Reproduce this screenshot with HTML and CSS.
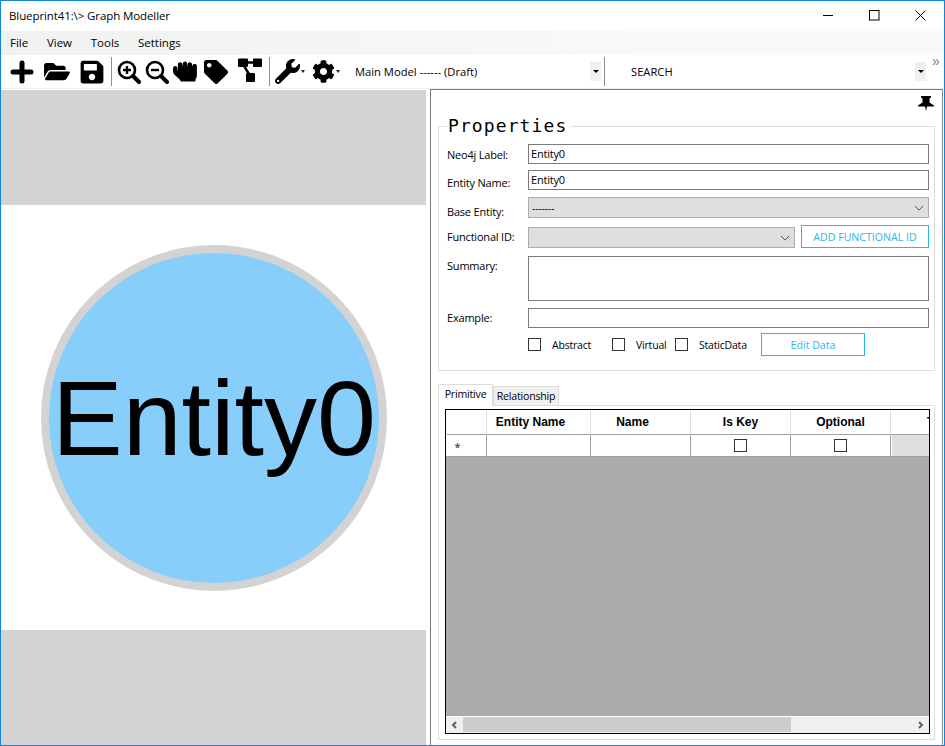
FILE: index.html
```html
<!DOCTYPE html>
<html lang="en">
<head>
<meta charset="utf-8">
<title>Blueprint41:\&gt; Graph Modeller</title>
<link rel="stylesheet" href="styles.css">
</head>
<body>
<div class="window">
  <header class="titlebar">
    <span class="title">Blueprint41:\&gt; Graph Modeller</span>
    <div class="winbtns">
      <svg class="winbtn" viewBox="0 0 11 11"><path d="M0 5.500H10" stroke="#000" stroke-width="1"/></svg>
      <svg class="winbtn" viewBox="0 0 11 11"><rect x="0.500" y="0.500" width="9.500" height="9.500" fill="none" stroke="#000"/></svg>
      <svg class="winbtn" viewBox="0 0 11 11"><path d="M0.500 0.500L10.500 10.500M10.500 0.500L0.500 10.500" stroke="#000" stroke-width="1"/></svg>
    </div>
  </header>
  <nav class="menubar">
    <span class="menu-item">File</span><span class="menu-item">View</span><span class="menu-item">Tools</span><span class="menu-item">Settings</span>
  </nav>
  <div class="toolbar">
    <svg class="ti i-plus" viewBox="0 0 24 24"><path d="M3 12H21M12 3V21" stroke="#000" stroke-width="5" stroke-linecap="round"/></svg>
    <svg class="ti i-folder" viewBox="0 0 576 512"><path d="M572.694 292.093L500.27 416.248A63.997 63.997 0 0 1 444.989 448H45.025c-18.523 0-30.064-20.093-20.731-36.093l72.424-124.155A64 64 0 0 1 152 256h399.964c18.523 0 30.064 20.093 20.73 36.093zM152 224h328v-48c0-26.51-21.49-48-48-48H272l-64-64H48C21.49 64 0 85.49 0 112v278.046l69.077-118.418C86.214 242.25 117.989 224 152 224z"/></svg>
    <svg class="ti i-save" viewBox="0 0 448 512"><path d="M433.941 129.941l-83.882-83.882A48 48 0 0 0 316.118 32H48C21.49 32 0 53.49 0 80v352c0 26.51 21.49 48 48 48h352c26.51 0 48-21.49 48-48V163.882a48 48 0 0 0-14.059-33.941zM224 416c-35.346 0-64-28.654-64-64 0-35.346 28.654-64 64-64s64 28.654 64 64c0 35.346-28.654 64-64 64zm96-304.52V212c0 6.627-5.373 12-12 12H76c-6.627 0-12-5.373-12-12V108c0-6.627 5.373-12 12-12h228.52c3.183 0 6.235 1.264 8.485 3.515l3.48 3.48A11.996 11.996 0 0 1 320 111.48z"/></svg>
    <span class="sep sep-a"></span>
    <svg class="ti i-zoomin" viewBox="0 0 24 24"><circle cx="10" cy="10" r="8" fill="none" stroke="#000" stroke-width="2.6"/><path d="M16 16L22 22" stroke="#000" stroke-width="4" stroke-linecap="round"/><path d="M6 10H14M10 6V14" stroke="#000" stroke-width="2.4"/></svg>
    <svg class="ti i-zoomout" viewBox="0 0 24 24"><circle cx="10" cy="10" r="8" fill="none" stroke="#000" stroke-width="2.6"/><path d="M16 16L22 22" stroke="#000" stroke-width="4" stroke-linecap="round"/><path d="M6 10H14" stroke="#000" stroke-width="2.4"/></svg>
    <svg class="ti i-hand" viewBox="0 0 512 512"><path d="M464.8 80c-26.9-.4-48.8 21.2-48.8 48h-8V96.8c0-26.3-20.9-48.3-47.2-48.8-26.9-.4-48.8 21.2-48.8 48v32h-8V80.8c0-26.3-20.9-48.3-47.2-48.8-26.9-.4-48.8 21.2-48.8 48v48h-8V96.8c0-26.3-20.9-48.3-47.2-48.8-26.9-.4-48.8 21.2-48.8 48v136l-8-7.1v-48.1c0-26.3-20.9-48.3-47.2-48.8C21.9 127.6 0 149.2 0 176v66.4c0 27.4 11.7 53.5 32.2 71.8l111.7 99.3c10.2 9.1 16.1 22.2 16.1 35.9 0 4.4 3.6 8 8 8h304c4.4 0 8-3.6 8-8v-13.6c0-12.9 2.6-25.6 7.5-37.6l15.2-35.8c4.9-11.9 7.3-24.7 7.3-37.6V128c0-26.2-21.3-47.6-47.2-48z"/></svg>
    <svg class="ti i-tag" viewBox="0 0 512 512"><path d="M0 252.118V48C0 21.49 21.49 0 48 0h204.118a48 48 0 0 1 33.941 14.059l211.882 211.882c18.745 18.745 18.745 49.137 0 67.882L293.823 497.941c-18.745 18.745-49.137 18.745-67.882 0L14.059 286.059A48 48 0 0 1 0 252.118zM112 64c-26.51 0-48 21.49-48 48s21.49 48 48 48 48-21.49 48-48-21.49-48-48-48z"/></svg>
    <svg class="ti i-tree" viewBox="0 0 24 24"><path d="M0 1.500A1 1 0 0 1 1 .5H9A1 1 0 0 1 10 1.500V8A1 1 0 0 1 9 9H1A1 1 0 0 1 0 8ZM15 1.500A1 1 0 0 1 16 .5H23A1 1 0 0 1 24 1.500V8A1 1 0 0 1 23 9H16A1 1 0 0 1 15 8ZM8 16A1 1 0 0 1 9 15H16A1 1 0 0 1 17 16V23A1 1 0 0 1 16 24H9A1 1 0 0 1 8 23Z"/><path d="M9 4.500H16M6 8L11 16" stroke="#000" stroke-width="2.4"/></svg>
    <span class="sep sep-b"></span>
    <svg class="ti i-wrench" viewBox="0 0 512 512"><path d="M507.73 109.1c-2.24-9.03-13.54-12.09-20.12-5.51l-74.36 74.36-67.88-11.31-11.31-67.88 74.36-74.36c6.62-6.62 3.43-17.9-5.66-20.16-47.38-11.74-99.55.91-136.58 37.93-39.64 39.64-50.55 97.1-34.05 147.2L18.74 402.76c-24.99 24.99-24.99 65.51 0 90.5 24.99 24.99 65.51 24.99 90.5 0l213.21-213.21c50.12 16.71 107.47 5.68 147.37-34.22 37.07-37.07 49.7-89.32 37.91-136.73zM64 472c-13.25 0-24-10.75-24-24 0-13.26 10.75-24 24-24s24 10.74 24 24c0 13.25-10.75 24-24 24z"/></svg>
    <span class="caret-small"></span>
    <svg class="ti i-gear" viewBox="0 0 512 512"><path d="M487.4 315.7l-42.6-24.6c4.3-23.2 4.3-47 0-70.2l42.6-24.6c4.9-2.8 7.1-8.6 5.5-14-11.1-35.6-30-67.8-54.7-94.6-3.8-4.1-10-5.1-14.8-2.3L380.8 110c-17.9-15.4-38.5-27.3-60.8-35.1V25.8c0-5.6-3.9-10.5-9.4-11.7-36.7-8.2-74.3-7.8-109.2 0-5.5 1.2-9.4 6.1-9.4 11.7V75c-22.2 7.9-42.8 19.8-60.8 35.1L88.7 85.5c-4.9-2.8-11-1.9-14.8 2.3-24.7 26.7-43.6 58.9-54.7 94.6-1.7 5.4.6 11.2 5.5 14L67.3 221c-4.3 23.2-4.3 47 0 70.2l-42.6 24.6c-4.9 2.8-7.1 8.6-5.5 14 11.1 35.6 30 67.8 54.7 94.6 3.8 4.1 10 5.1 14.8 2.3l42.6-24.6c17.9 15.4 38.5 27.3 60.8 35.1v49.2c0 5.6 3.9 10.5 9.4 11.7 36.7 8.2 74.3 7.8 109.2 0 5.5-1.2 9.4-6.1 9.4-11.7v-49.2c22.2-7.9 42.8-19.8 60.8-35.1l42.6 24.6c4.9 2.8 11 1.9 14.8-2.3 24.7-26.7 43.6-58.9 54.7-94.6 1.5-5.5-.7-11.3-5.6-14.1zM256 336c-44.1 0-80-35.9-80-80s35.9-80 80-80 80 35.9 80 80-35.9 80-80 80z"/></svg>
    <span class="caret-small"></span>
    <div class="tcombo tcombo-model"><span class="tcombo-text">Main Model ------ (Draft)</span><span class="tdrop"><span class="tdrop-arrow"></span></span></div>
    <span class="sep sep-c"></span>
    <div class="tcombo tcombo-search"><span class="tcombo-text">SEARCH</span><span class="tdrop"><span class="tdrop-arrow"></span></span></div>
    <span class="overflow">»</span>
  </div>
  <main class="content">
    <section class="canvas">
      <div class="band band-top"></div>
      <div class="stage">
        <div class="entity"><span class="entity-name">Entity0</span></div>
      </div>
      <div class="band band-bottom"></div>
    </section>
    <aside class="panel">
      <div class="pinbar">
        <svg class="pin" viewBox="0 0 16 15"><path d="M3 0H13V1.500L11.500 2.500V6.500L16 9.500V10.500H9L8 15L7 10.500H0V9.500L4.500 6.500V2.500L3 1.500Z"/></svg>
      </div>
      <fieldset class="props">
        <legend class="props-title">Properties</legend>
        <div class="row row-neo"><label class="lbl">Neo4j Label:</label><div class="field">Entity0</div></div>
        <div class="row row-name"><label class="lbl">Entity Name:</label><div class="field">Entity0</div></div>
        <div class="row row-base"><label class="lbl">Base Entity:</label><div class="select"><span>-------</span><svg class="chev" viewBox="0 0 12 7"><path d="M1 1L6 6L11 1" fill="none" stroke="#555" stroke-width="1.200"/></svg></div></div>
        <div class="row row-func"><label class="lbl">Functional ID:</label><div class="select select-short"><span></span><svg class="chev" viewBox="0 0 12 7"><path d="M1 1L6 6L11 1" fill="none" stroke="#555" stroke-width="1.200"/></svg></div><button class="flat flat-add">ADD FUNCTIONAL ID</button></div>
        <div class="row row-sum"><label class="lbl">Summary:</label><div class="field field-tall"></div></div>
        <div class="row row-ex"><label class="lbl">Example:</label><div class="field"></div></div>
        <div class="row row-checks">
          <span class="check"></span><span class="chk-lbl chk-abstract">Abstract</span>
          <span class="check"></span><span class="chk-lbl chk-virtual">Virtual</span>
          <span class="check"></span><span class="chk-lbl chk-static">StaticData</span>
          <button class="flat flat-edit">Edit Data</button>
        </div>
      </fieldset>
      <div class="tabs">
        <span class="tab tab-active">Primitive</span><span class="tab">Relationship</span>
      </div>
      <div class="tabpage">
        <div class="dgrid">
          <div class="dhead">
            <span class="rowhead"></span>
            <span class="col col-entity col-shift">Entity Name</span>
            <span class="col col-name col-shift">Name</span>
            <span class="col col-key">Is Key</span>
            <span class="col col-opt">Optional</span>
            <span class="col col-rest">T</span>
          </div>
          <div class="drow">
            <span class="rowhead rowhead-new"><span class="star">*</span></span>
            <span class="cell col-entity"></span>
            <span class="cell col-name"></span>
            <span class="cell col-key"><span class="check"></span></span>
            <span class="cell col-opt"><span class="check"></span></span>
            <span class="cell cell-rest"></span>
          </div>
          <div class="dempty"></div>
          <div class="hscroll">
            <svg class="sarrow" viewBox="0 0 8 8"><path d="M5.500 1L2.500 4L5.500 7" fill="none" stroke="#606060" stroke-width="2"/></svg>
            <div class="strack"><div class="sthumb"></div></div>
            <svg class="sarrow" viewBox="0 0 8 8"><path d="M2.500 1L5.500 4L2.500 7" fill="none" stroke="#606060" stroke-width="2"/></svg>
          </div>
        </div>
      </div>
    </aside>
  </main>
</div>
</body>
</html>
```
FILE: styles.css
```css
* { box-sizing: border-box; }
html, body { margin: 0; padding: 0; }
body { width: 945px; height: 746px; overflow: hidden; background: #fff; font-family: "Open Sans", "Noto Sans", sans-serif; font-size: 12px; color: #000; }

.window { width: 945px; height: 746px; border: 1px solid #0f85d9; border-bottom-color: #3a7aa6; display: flex; flex-direction: column; background: #fff; }

.titlebar { height: 30px; flex: none; display: flex; align-items: center; justify-content: space-between; padding-left: 8px; padding-bottom: 2px; }
.title { font-size: 11.500px; letter-spacing: -0.1px; }
.winbtns { display: flex; align-items: center; padding-right: 18px; margin-top: 1px; }
.winbtn { width: 11px; height: 11px; margin-left: 35px; display: block; }

.menubar { height: 24px; flex: none; display: flex; align-items: center; background: linear-gradient(to right, #f1f1f1, #f9f9f9 70%); padding-left: 9px; padding-bottom: 2px; font-size: 11.500px; }
.menu-item { margin-right: 18.700px; }

.toolbar { height: 34px; flex: none; display: flex; align-items: center; background: #fff; border-bottom: 1px solid #f0f0f0; padding-left: 9px; }
.ti { display: block; flex: none; fill: #000; }
.i-plus { width: 24px; height: 24px; }
.i-folder { width: 26px; height: 23px; margin-left: 10px; }
.i-save { width: 24px; height: 26px; margin-left: 10px; }
.i-zoomin { width: 24px; height: 24px; margin-left: 5px; }
.i-zoomout { width: 24px; height: 24px; margin-left: 4px; }
.i-hand { width: 24px; height: 24px; margin-left: 4px; }
.i-tag { width: 24px; height: 24px; margin-left: 7px; }
.i-tree { width: 24px; height: 24px; margin-left: 10px; margin-top: -3px; }
.i-wrench { width: 25px; height: 25px; margin-left: 5px; }
.i-gear { width: 23px; height: 25px; margin-left: 7px; }
.sep { flex: none; width: 1px; height: 29px; background: #8e8e8e; }
.sep-a { margin-left: 7px; }
.sep-b { margin-left: 7px; }
.sep-c { margin-left: 3px; }
.caret-small { flex: none; width: 0; height: 0; margin-left: 1px; border-left: 2.500px solid transparent; border-right: 2.500px solid transparent; border-top: 3px solid #222; }
.tcombo { flex: none; display: flex; align-items: center; justify-content: space-between; }
.tcombo-model { width: 246px; margin-left: 15px; }
.tcombo-search { width: 295px; margin-left: 26px; }
.tcombo-text { font-size: 11.200px; }
.tdrop { width: 11px; height: 19px; background: #f0f0f0; display: flex; align-items: center; justify-content: center; }
.tdrop-arrow { width: 0; height: 0; border-left: 3px solid transparent; border-right: 3px solid transparent; border-top: 3px solid #000; }
.overflow { flex: none; margin-left: 6px; align-self: flex-start; margin-top: 0; color: #7a7aa8; font-size: 14px; line-height: 12px; font-family: "Liberation Sans", sans-serif; }

.content { flex: 1; display: flex; min-height: 0; }

.canvas { width: 425px; flex: none; display: flex; flex-direction: column; margin-top: 1px; }
.band { background: #d3d3d3; flex: none; }
.band-top { height: 115px; }
.band-bottom { height: 115px; }
.stage { height: 425px; flex: none; background: #fff; display: flex; align-items: center; justify-content: center; }
.entity { width: 346px; height: 346px; border-radius: 50%; background: #87cefa; border: 8px solid #d3d3d3; display: flex; align-items: center; justify-content: center; margin-left: 1px; }
.entity-name { font-family: "Liberation Sans", Arial, sans-serif; font-size: 106px; line-height: 1; white-space: nowrap; }

.panel { margin-left: 4px; width: 513px; height: 656px; flex: none; border-left: 1px solid #7a7a7a; border-top: 1px solid #7a7a7a; border-right: 1px solid #8a8a8a; display: flex; flex-direction: column; padding: 0 7px 0 7px; }
.pinbar { height: 26px; flex: none; display: flex; justify-content: flex-end; padding-top: 6px; }
.pin { width: 16px; height: 15px; display: block; fill: #000; margin-right: 1px; }

.props { margin: 0; padding: 0 5px 0 8px; height: 255px; width: 497px; flex: none; border: 1px solid #dcdcdc; display: flex; flex-direction: column; }
.props-title { font-family: "DejaVu Sans Mono", "Liberation Mono", monospace; font-size: 18px; letter-spacing: 1.100px; line-height: 20px; padding: 0 4px 0 1px; margin-left: 0; }
.lbl { width: 81px; flex: none; font-size: 11px; white-space: nowrap; letter-spacing: -0.2px; }
.row { display: flex; align-items: flex-start; flex: none; }
.field { flex: 1; height: 20px; border: 1px solid #7a7a7a; background: #fff; font-size: 11px; padding: 1px 2px; line-height: 15px; letter-spacing: -0.2px; }
.field-tall { height: 45px; }
.select { flex: 1; height: 21px; background: #dfdfdf; border: 1px solid #adadad; display: flex; align-items: center; justify-content: space-between; padding: 0 4px 0 3px; font-size: 10px; }
.select-short { flex: none; width: 267px; }
.chev { width: 10px; height: 6px; display: block; }

.row-neo { margin-top: 8px; }
.row-name { margin-top: 6px; }
.row-base { margin-top: 7px; }
.row-func { margin-top: 8px; }
.row-sum { margin-top: 8px; }
.row-ex { margin-top: 7px; }
.row-checks { margin-top: 5px; margin-left: 81px; align-items: center; height: 23px; }
.row-neo .lbl { padding-top: 3px; }
.row-name .lbl { padding-top: 5px; }
.row-base .lbl { padding-top: 7px; }
.row-func .lbl { padding-top: 2px; }
.row-sum .lbl { padding-top: 2px; }
.row-ex .lbl { padding-top: 2px; }

.check { width: 13px; height: 13px; border: 1px solid #333; background: #fff; display: block; flex: none; }
.chk-lbl { font-size: 10.500px; letter-spacing: -0.2px; }
.chk-abstract { margin-left: 11px; width: 60px; }
.chk-virtual { margin-left: 11px; width: 39px; }
.chk-static { margin-left: 11px; width: 62px; }
.flat { background: #fff; border: 1px solid #29b6f0; color: #29b6f0; font-family: inherit; font-size: 10.600px; padding: 0; cursor: pointer; }
.flat-add { flex: none; width: 128px; height: 23px; margin-left: 6px; margin-top: -2px; }
.flat-edit { flex: none; width: 104px; height: 23px; }

.tabs { display: flex; flex: none; margin-top: 13px; height: 21px; align-items: flex-end; }
.tab { height: 19px; width: 66px; background: #f0f0f0; border: 1px solid #dcdcdc; border-bottom: none; font-size: 10.600px; text-align: center; line-height: 18px; letter-spacing: -0.2px; }
.tab-active { height: 22px; width: 55px; background: #fff; line-height: 19px; position: relative; z-index: 1; margin-bottom: -1px; }

.tabpage { width: 497px; height: 335px; flex: none; border: 1px solid #dcdcdc; padding: 3px 5px 0 6px; background: #fff; }
.dgrid { width: 485px; height: 325px; border: 1px solid #000; display: flex; flex-direction: column; overflow: hidden; background: #ababab; }

.dhead { display: flex; height: 25px; flex: none; background: #fff; }
.dhead > span { border-right: 1px solid #dfdfdf; border-bottom: 1px solid #a0a0a0; font-weight: bold; font-family: "Liberation Sans", Arial, sans-serif; font-size: 12px; display: flex; align-items: center; justify-content: center; }
.dhead > .col-shift { padding-right: 16px; }
.dhead > .col-rest { width: 100px; flex: none; justify-content: flex-start; padding-left: 36px; border-right: none; }
.rowhead { width: 40px; flex: none; background: #fff; margin-left: 1px; }
.col-entity { width: 104px; flex: none; }
.col-name { width: 100px; flex: none; }
.col-key { width: 100px; flex: none; }
.col-opt { width: 100px; flex: none; }
.drow { display: flex; height: 22px; flex: none; background: #fff; border-bottom: 1px solid #a0a0a0; }
.rowhead-new { display: flex; align-items: center; justify-content: center; border-right: 1px solid #a0a0a0; margin-left: 1px; padding-right: 18px; padding-top: 2px; }
.star { font-weight: bold; font-size: 10px; color: #555; line-height: 10px; }
.cell { border-right: 1px solid #a0a0a0; display: flex; align-items: center; justify-content: center; }
.cell-rest { flex: 1; background: #dfdfdf; border-right: none; border-left: 1px solid #fff; }
.dempty { flex: 1; background: #ababab; }
.hscroll { height: 17px; flex: none; display: flex; background: #f0f0f0; border-top: 1px solid #fff; }
.sarrow { width: 17px; height: 16px; flex: none; display: block; padding: 4px; }
.strack { flex: 1; }
.sthumb { width: 328px; height: 15px; background: #cdcdcd; }
```
